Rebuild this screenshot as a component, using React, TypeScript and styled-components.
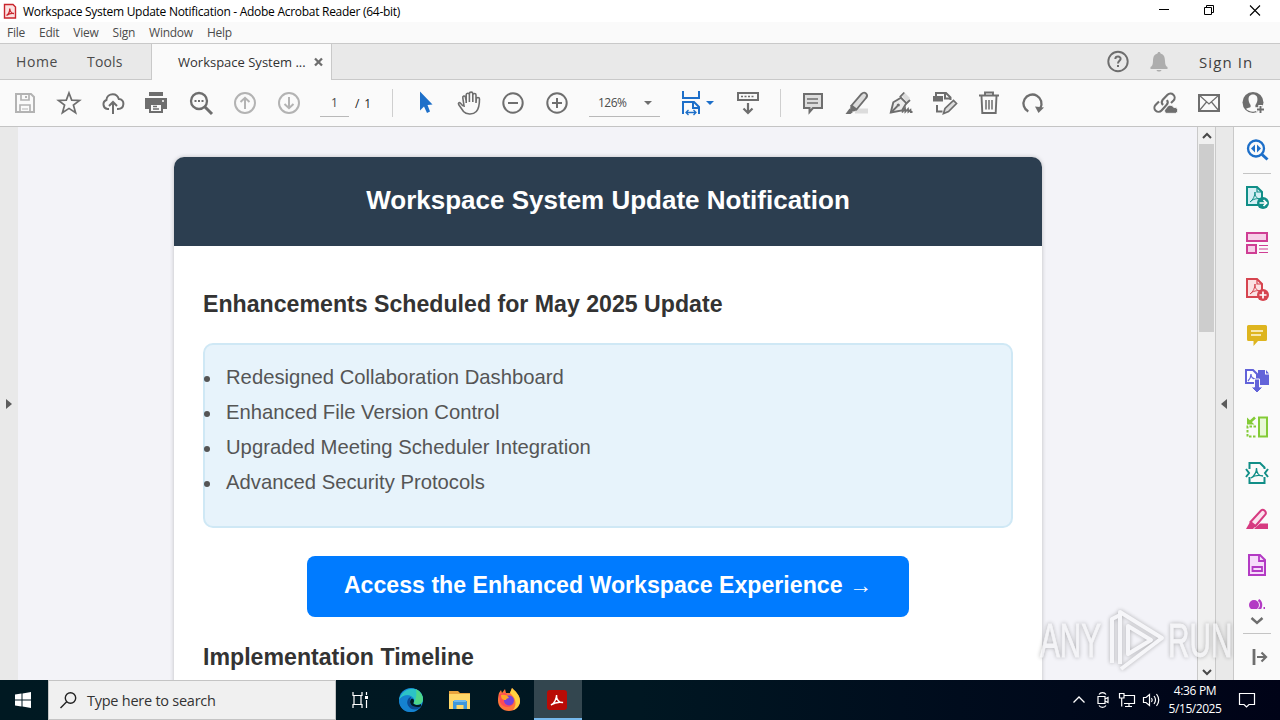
import { FC, ReactNode } from 'react';
import styled, { createGlobalStyle, css } from 'styled-components';

const GlobalStyle = createGlobalStyle`
  * {
    box-sizing: border-box;
  }

  body {
    margin: 0;
    overflow: hidden;
    font-family: 'Open Sans', 'Noto Sans', sans-serif;
  }
`;

const Screen = styled.div`
  position: relative;
  width: 1280px;
  height: 720px;
  display: flex;
  flex-direction: column;
  overflow: hidden;
  background: #fafafa;
`;

const Text = styled.span<{
  $size?: number;
  $spacing?: number;
  $color?: string;
}>`
  font-size: ${({ $size = 12 }) => $size}px;
  letter-spacing: ${({ $spacing = 0 }) => $spacing}px;
  color: ${({ $color = '#4b4b4b' }) => $color};
  white-space: nowrap;
`;

const Svg = styled.svg`
  display: block;
  flex: none;
  overflow: visible;
`;

interface IconProps {
  size?: number;
  color?: string;
  width?: number;
  children: ReactNode;
}

const Icon: FC<IconProps> = ({
  size = 24,
  color = '#6e6e6e',
  width = 2,
  children,
}) => (
  <Svg
    width={size}
    height={size}
    viewBox={`0 0 ${size} ${size}`}
    fill="none"
    stroke={color}
    strokeWidth={width}
  >
    {children}
  </Svg>
);

/* Title bar */

const TitleBar = styled.header`
  height: 22px;
  display: flex;
  align-items: center;
  padding-left: 3px;
  background: #fff;
`;

const TitleText = styled(Text)`
  flex: 1;
  padding-left: 5px;
`;

const WindowButtons = styled.div`
  display: flex;
  padding-right: 2px;
`;

const WindowButton = styled.div`
  width: 46px;
  display: flex;
  justify-content: center;
`;

const MenuBar = styled.nav`
  height: 21px;
  display: flex;
  align-items: center;
  gap: 14px;
  padding-left: 7px;
`;

/* Tabs */

const TabBar = styled.div`
  height: 37px;
  display: flex;
  background: #e9e9e9;
  border-top: 1px solid #c9c9c9;
  border-bottom: 1px solid #c9c9c9;
`;

const TabLinks = styled.div`
  width: 151px;
  display: flex;
  align-items: center;
  gap: 29px;
  padding-left: 16px;
`;

const ActiveTab = styled.div`
  width: 181px;
  height: 36px;
  display: flex;
  align-items: center;
  justify-content: space-between;
  padding: 0 8px 0 26px;
  background: #fafafa;
  border: solid #c9c9c9;
  border-width: 0 1px;
`;

const TabActions = styled.div`
  margin-left: auto;
  display: flex;
  align-items: center;
`;

const TabAction = styled.div`
  width: 41px;
  display: flex;
  justify-content: center;
`;

const SignIn = styled(Text)`
  width: 101px;
  padding-left: 20px;
`;

/* Toolbar */

const ToolbarRow = styled.div`
  height: 47px;
  display: flex;
  align-items: center;
  padding: 0 5px 0 3px;
  border-bottom: 1px solid #c4c4c4;
`;

const ToolSlot = styled.div<{ $width?: number }>`
  width: ${({ $width = 44 }) => $width}px;
  display: flex;
  justify-content: center;
  align-items: center;
`;

const Separator = styled.div<{ $before?: number; $after?: number }>`
  width: 1px;
  height: 28px;
  background: #cfcfcf;
  margin: 0 ${({ $after = 10 }) => $after}px 0 ${({ $before = 20 }) => $before}px;
`;

const PageField = styled.div`
  width: 29px;
  height: 27px;
  margin-left: 9px;
  display: flex;
  align-items: center;
  justify-content: center;
  border-bottom: 1px solid #b9b9b9;
`;

const PageCount = styled(Text)`
  width: 17px;
  margin-left: 6px;
`;

const ZoomField = styled.div`
  width: 71px;
  height: 27px;
  margin: 0 12px 0 10px;
  display: flex;
  align-items: center;
  justify-content: space-between;
  padding: 0 8px 0 9px;
  border-bottom: 1px solid #b9b9b9;
`;

const Caret = styled.i<{ $color?: string }>`
  border: 4px solid transparent;
  border-top-color: ${({ $color = '#6e6e6e' }) => $color};
  border-bottom: 0;
`;

const FitControl = styled.div`
  width: 39px;
  display: flex;
  align-items: center;
  gap: 3px;
`;

const ToolbarEnd = styled.div`
  margin-left: auto;
  display: flex;
`;

/* Workspace */

const Workspace = styled.main`
  height: 553px;
  display: flex;
`;

const gutter = css`
  flex: none;
  display: flex;
  align-items: center;
  justify-content: center;
  background: #e9e9e9;
`;

const LeftGutter = styled.div`
  ${gutter}
  width: 18px;
`;

const RightGutter = styled.div`
  ${gutter}
  width: 19px;
  padding-right: 2px;
  border: solid #c9c9c9;
  border-width: 0 1px;
`;

const Arrow = styled.i<{ $left?: boolean }>`
  border: solid transparent;
  border-width: 5px 6px;
  ${({ $left }) =>
    $left
      ? 'border-right-color: #5c5c5c; border-left: 0;'
      : 'border-left-color: #5c5c5c; border-right: 0;'}
`;

const PageArea = styled.section`
  width: 1179px;
  height: 553px;
  padding: 30px 0 0 156px;
  overflow: hidden;
  background: #f3f3f8;
`;

const Card = styled.article`
  width: 868px;
  height: 600px;
  border-radius: 10px;
  overflow: hidden;
  background: #fff;
  box-shadow: 0 0 4px rgba(0, 0, 0, 0.22);
  font-family: 'Liberation Sans', Arial, sans-serif;
`;

const CardHeader = styled.h1`
  height: 89px;
  margin: 0;
  display: flex;
  align-items: center;
  justify-content: center;
  padding-bottom: 3px;
  background: #2c3e50;
  color: #fff;
  font-size: 26px;
`;

const CardBody = styled.div`
  padding: 44px 29px 0;
  display: flex;
  flex-direction: column;
`;

const Heading = styled.h2`
  margin: 0;
  font-size: 23.15px;
  line-height: 28px;
  color: #333;
`;

const FeatureList = styled.ul`
  height: 185px;
  margin: 25px 0 28px;
  padding: 15px 0 0;
  border: 2px solid #cfe8f5;
  border-radius: 10px;
  background: #e7f3fb;
  font-size: 20.25px;
  line-height: 35px;
  color: #555;
  list-style: none;
`;

const Feature = styled.li`
  display: flex;
  align-items: center;

  &::before {
    content: '';
    width: 6px;
    height: 6px;
    margin: 3px 16px 0 -1px;
    border-radius: 50%;
    background: #555;
  }
`;

const AccessButton = styled.div`
  width: 602px;
  height: 61px;
  margin: 0 auto 26px;
  display: flex;
  align-items: center;
  justify-content: center;
  padding-bottom: 3px;
  border-radius: 8px;
  background: #007bff;
  color: #fff;
  font-size: 23.15px;
  font-weight: bold;
`;

const Scrollbar = styled.div`
  width: 18px;
  display: flex;
  flex-direction: column;
  align-items: center;
  background: #f0f0f0;
  border-left: 1px solid #c9c9c9;
`;

const ScrollButton = styled.div`
  width: 17px;
  height: 17px;
  display: flex;
  align-items: center;
  justify-content: center;
`;

const ScrollThumb = styled.div`
  width: 15px;
  height: 188px;
  margin-bottom: auto;
  background: #cdcdcd;
`;

/* Tool rail */

const Rail = styled.aside`
  width: 46px;
  display: flex;
  flex-direction: column;
  align-items: center;
`;

const RailSlot = styled.div<{ $height?: number }>`
  height: ${({ $height = 46 }) => $height}px;
  flex: none;
  display: flex;
  align-items: center;
`;

const ClippedSlot = styled.div`
  height: 21px;
  padding-top: 12px;
  overflow: hidden;
`;

const RailRule = styled.div`
  flex: none;
  width: 28px;
  height: 1px;
  background: #c4c4c4;
`;

/* Taskbar */

const Taskbar = styled.footer`
  height: 40px;
  display: flex;
  align-items: center;
  background: linear-gradient(90deg, #001922 0%, #001722 50%, #000c1d 75%, #000317);
`;

const TaskButton = styled.div<{ $active?: boolean; $width?: number }>`
  width: ${({ $width = 49 }) => $width}px;
  height: 40px;
  display: flex;
  align-items: center;
  justify-content: center;
  padding-right: 2px;
  ${({ $active }) =>
    $active &&
    css`
      background: #33464f;
      border-bottom: 2px solid #76b9ed;
      padding-top: 2px;
    `}
`;

const SearchBox = styled.div`
  width: 288px;
  height: 40px;
  display: flex;
  align-items: center;
  gap: 9px;
  padding-left: 10px;
  background: #f0f0f0;
  border: 1px solid #c4c4c4;
`;

const Tray = styled.div`
  margin-left: auto;
  display: flex;
  align-items: center;
`;

const TraySlot = styled.div`
  width: 24px;
  display: flex;
  justify-content: center;
`;

const Clock = styled.div`
  width: 64px;
  display: flex;
  flex-direction: column;
  align-items: center;
  line-height: 18px;
`;

const ActionCenter = styled.div`
  width: 53px;
  display: flex;
  justify-content: center;
  padding: 0 13px 1px 0;
`;

const Watermark = styled.div`
  position: absolute;
  left: 1040px;
  top: 606px;
  width: 196px;
  height: 70px;
  display: flex;
  align-items: center;
  opacity: 0.7;
  filter: drop-shadow(0 0 2px rgba(0, 0, 0, 0.4));
`;

const WatermarkText = styled.span<{ $width: number }>`
  width: ${({ $width }) => $width}px;
  font-family: 'Liberation Sans', Arial, sans-serif;
  font-size: 48px;
  line-height: 70px;
  color: #f5f5f7;
  -webkit-text-stroke: 0.8px #f5f5f7;
  transform: scaleX(0.62);
  transform-origin: 0 50%;
  white-space: nowrap;
`;

const pdfGlyph = 'M5 17C8 15 10 11 10 7C10 12 12 14 16 14C12 13 8 14 5 17Z';

const toolsStart = [
  <Icon color="#b3b3b3">
    <path d="M3 3H18L21 6V21H3Z" />
    <path d="M8 3V9H16V3M7 21V14H17V21" strokeWidth={1.7} />
    <path d="M13 5V7" />
    <path d="M9 18H15" strokeWidth={1} />
  </Icon>,
  <Icon>
    <path
      d="M12 2L14.7 9.1L22.5 9.4L16.4 14.1L18.6 21.8L12 17.4L5.4 21.8L7.6 14.1L1.5 9.4L9.3 9.1Z"
      strokeWidth={1.7}
    />
  </Icon>,
  <Icon>
    <path d="M8 18H6.5A4.7 4.7 0 0 1 5.4 9C5.6 5.3 8.5 3.2 11.8 3.2C15 3.2 17 5.3 17.8 8.1C21 8.2 22.6 10.4 22.4 13C22.2 16 20.2 18 17 18H16M12 23V11M8 15L12 11L16 15" />
  </Icon>,
  <Icon>
    <path d="M4 1H18V5H4Z" fill="#6e6e6e" stroke="none" />
    <path d="M0 7H22V18H18V14H4V18H0Z" fill="#6e6e6e" stroke="none" />
    <path d="M5 14V21H17V14" />
    <path d="M8 15.5H12M8 18H14" strokeWidth={1.3} />
    <path d="M17 10H19" stroke="#fff" strokeWidth={1.5} />
  </Icon>,
  <Icon>
    <circle cx="10" cy="10" r="8" strokeWidth={2.3} />
    <path d="M16 16L23 23" strokeWidth={3} />
    <path d="M5.5 10H14.5" strokeDasharray="2 1.5" />
  </Icon>,
  <Icon color="#b3b3b3">
    <circle cx="12" cy="12" r="10" />
    <path d="M12 18V7M7.5 11L12 6.8L16.5 11" />
  </Icon>,
  <Icon color="#b3b3b3">
    <circle cx="12" cy="12" r="10" />
    <path d="M12 6V17M7.5 13L12 17.2L16.5 13" />
  </Icon>,
];

const toolsMiddle = [
  <Icon>
    <path
      d="M7 0.5L19.5 13.5L14.5 14L17 20.5L14 22L11 15.5L7 19.5Z"
      fill="#1d6fc9"
      stroke="none"
    />
  </Icon>,
  <Icon>
    <path
      d="M6 15L3.5 12.3C2.2 11 .8 12.1 1.8 13.8L6.5 20.5C9 23.5 16 24 19.3 20.5C21.5 18.2 22.5 13 22.5 8C22.5 6 19.5 6 19.3 8L19 12V4C19 2 16 2 15.8 4V11M15.8 10V2.5C15.8.6 12.5.6 12.4 2.5V11M12.4 10V3.5C12.2 1.7 9.2 1.9 9.2 3.8V12M9.2 10L8.4 6C7.9 4.4 5.4 5 5.8 6.8L7.2 16"
      strokeWidth={1.6}
    />
  </Icon>,
  <Icon>
    <circle cx="12" cy="12" r="9.7" />
    <path d="M7 12H17" />
  </Icon>,
  <Icon>
    <circle cx="12" cy="12" r="9.7" />
    <path d="M7 12H17M12 7V17" />
  </Icon>,
];

const toolsEnd = [
  <Icon>
    <path d="M3 3H21V17H12L8.5 21V17H3Z" fill="#ddd" />
    <path d="M6 8H17M6 12H17" strokeWidth={1.4} />
  </Icon>,
  <Icon>
    <path d="M10 17.5H23V22.5H10Z" fill="#dcdcdc" stroke="none" />
    <path
      d="M6.5 14.5L16.5 3C18 1.4 19.5 1.2 21 2.4C22.6 3.8 22.4 5.4 21 7L11.5 18.5Z"
      fill="#dcdcdc"
      strokeWidth={1.9}
    />
    <path d="M5.5 14L12 19L9 20.5L5 20Z" fill="#6e6e6e" stroke="none" />
    <path d="M4.5 17.5L8 21L5.5 23H.5Z" fill="#6e6e6e" stroke="none" />
  </Icon>,
  <Icon>
    <path d="M13 5L16 2L21 7L18 11Z" fill="#dcdcdc" stroke="none" />
    <path
      d="M1.8 21.5L4.3 11.3L12 6.8L17.3 12.2L13 19.5Z"
      fill="#ececec"
      strokeWidth={1.9}
    />
    <path d="M10.8 6.2L15.3 1.5M16.8 13L21 9M2 21.5L8.5 15" strokeWidth={1.8} />
    <circle cx="9.3" cy="14" r="1.6" fill="#6e6e6e" stroke="none" />
    <path
      d="M13 21.5L16 17.5L16.3 20.8L19 18L19.3 20.8L21.5 19L21.8 21H23.5"
      strokeWidth={1.8}
    />
  </Icon>,
  <Icon>
    <path d="M0 5H10V10.5H0Z" fill="#6e6e6e" stroke="none" />
    <path d="M3 5V2H13L17.5 6.5V9M12 2V7.5H17.5M4 14V20.5H9.5" />
    <path
      d="M10.5 22.5L12 17.5L20.5 9.5L23.5 12.5L15.5 20.5Z"
      fill="#dcdcdc"
      strokeWidth={1.7}
    />
  </Icon>,
  <Icon>
    <path
      d="M2 4.5H22M8 4V1.5H16V4M4.5 5L5.3 22H18.7L19.5 5"
      strokeWidth={1.9}
    />
    <path d="M9 9V18.5M12 9V18.5M15 9V18.5" strokeWidth={1.5} />
  </Icon>,
  <Icon>
    <path d="M7.3 20.5A9 9 0 1 1 19.3 17" strokeWidth={2.3} />
    <path d="M14 15.5L23 16.5L17.5 22Z" fill="#6e6e6e" stroke="none" />
  </Icon>,
];

const accountTools = [
  <Icon>
    <path
      d="M10 14A4 4 0 0 1 9.5 9L14.5 3.8A4 4 0 0 1 20.5 9.5L18 12M14 9A4 4 0 0 1 13.5 14L8.5 19.5A4 4 0 0 1 2.5 14L6 10.5"
      strokeWidth={2.1}
    />
    <path
      d="M13 22.3A2.8 2.8 0 0 1 13.3 17.3A4 4 0 0 1 20.8 16.5A3 3 0 0 1 22.5 22.3Z"
      fill="#6e6e6e"
      stroke="#fafafa"
      strokeWidth={0.8}
    />
  </Icon>,
  <Icon>
    <path d="M2 4H22V20H2Z" />
    <path d="M2 4L12 13L22 4M2 20L9.5 11M22 20L14.5 11" strokeWidth={1.2} />
  </Icon>,
  <Icon>
    <circle cx="12" cy="11.5" r="10.5" fill="#6e6e6e" stroke="none" />
    <path
      d="M12 3.5C15.2 3.5 16.7 5.8 16.4 9C16.2 11 15.4 12.8 14.4 14V16C15 16.8 17 17 18 18C16 20 14 20.7 12 20.7C9 20.7 6.5 19.5 5 17.8C6.5 16.8 9 16.8 9.6 16V14C8.6 12.8 7.8 11 7.6 9C7.3 5.8 8.8 3.5 12 3.5Z"
      fill="#fafafa"
      stroke="none"
    />
    <path
      d="M15 18.5H24M19.5 14V23"
      stroke="#fafafa"
      strokeWidth={4.5}
    />
    <path d="M16 18.5H23M19.5 15V22" strokeWidth={1.9} />
  </Icon>,
];

const railTools = [
  <Icon color="#108e87">
    <path d="M2 2H12L17 7V20H2Z" fill="#d6eff5" />
    <path d="M12 2V7H17" strokeWidth={1.2} />
    <path d={pdfGlyph} strokeWidth={1} />
    <circle cx="18" cy="18" r="6" fill="#108e87" stroke="none" />
    <path
      d="M14.5 18H21M18.5 15L21.5 18L18.5 21"
      stroke="#fff"
      strokeWidth={1.7}
    />
  </Icon>,
  <Icon color="#cf3e94">
    <path d="M2 2H22V10H2Z M2 14H11V22H2Z" fill="#f7cfe8" />
    <path d="M14 14.5H23M14 18H23M14 21.5H23" strokeWidth={1.2} />
  </Icon>,
  <Icon color="#d6444f">
    <path d="M2 2H12L17 7V20H2Z" fill="#fbe2e3" />
    <path d="M12 2V7H17" strokeWidth={1.2} />
    <path d={pdfGlyph} strokeWidth={1} />
    <circle cx="18" cy="18" r="6" fill="#d6444f" stroke="none" />
    <path d="M14.5 18H21.5M18 14.5V21.5" stroke="#fff" strokeWidth={1.7} />
  </Icon>,
  <Icon>
    <path
      d="M3.5 2H20.5Q22 2 22 3.5V16.5Q22 18 20.5 18H13L8.5 23V18H3.5Q2 18 2 16.5V3.5Q2 2 3.5 2Z"
      fill="#deb51f"
      stroke="none"
    />
    <path d="M6 8H18M6 12H16" stroke="#fff7dd" strokeWidth={1.6} />
  </Icon>,
  <Icon color="#6263d9">
    <path d="M13 1H20V5.5H24V16H13Z M21 1L24 4.5H21Z" fill="#6263d9" stroke="none" />
    <path d="M1 1H8L12 5V14H1Z" fill="#fff" />
    <path d="M3 12C6 9 6 7 6 5C6 8 8 10 11 10" strokeWidth={1.2} />
    <path
      d="M9.5 10H14.5V18H18L12 24L6 18H9.5Z"
      fill="#6263d9"
      stroke="#fafafa"
      strokeWidth={1}
    />
  </Icon>,
  <Icon color="#83cb36">
    <path d="M14 2.5H22V21.5H14Z" fill="#e8f8d6" />
    <path d="M11 11.5H2.5V21.5H12" strokeWidth={2} strokeDasharray="2.5 1.5" />
    <path d="M10 2.5L4.5 7.5" strokeWidth={2.6} />
    <path d="M2 2.5V9.5H9.5Z" fill="#83cb36" stroke="none" />
  </Icon>,
  <Icon color="#108e87">
    <path d="M4.5 8V2H15L19.5 6.5V8M4.5 16V22H19.5V16M1 8L4 12L1 16M23 8L20 12L23 16" />
    <path
      d="M6 17C9 15 11.5 12 11.5 7C11.5 12 14 15 18 15C14 14 10 14 6 17Z"
      strokeWidth={1.3}
    />
  </Icon>,
  <Icon color="#d63a80">
    <path d="M9 22L15 16.5H23V22Z" fill="#d63a80" stroke="none" />
    <path
      d="M5.5 15L16 3.5C18.3 1.6 22.3 4.8 20.2 7.7L10.5 19Z"
      fill="#fbe2ee"
    />
    <path d="M1 22L5 15L10.5 19.5L8 22Z" fill="#d63a80" stroke="none" />
  </Icon>,
  <Icon color="#b33ac4">
    <path d="M4 2H15L20 7V22H4Z" fill="#f6dcfa" />
    <path d="M14 2V8H20M7.5 14H17V18H7.5Z" strokeWidth={1.8} />
  </Icon>,
];

const EdgeLogo = () => (
  <Icon>
    <circle cx="12" cy="12" r="12" fill="#1689d8" stroke="none" />
    <path
      d="M0 12C2 3 12 -2 19 2.3C24 5.5 25.5 12 22.5 15C20 17.3 15.5 17 14.3 15.3C16 13.5 15.5 10 13 8.8C9 6.5 3 7.5 0 12Z"
      fill="#2cc3c6"
      stroke="none"
    />
    <path
      d="M17 1.2C23 4 25.5 11 22.8 14.7C20.5 17.3 15.5 17 14.3 15.3C17 12 18 6 17 1.2Z"
      fill="#4fd688"
      stroke="none"
    />
    <path
      d="M0 12C3 7 9 6 12.8 8.7C8.5 9 6.5 13 8.5 17C10 20.5 14 23 17.5 22.5C9 27 0 21.5 0 12Z"
      fill="#1582d0"
      stroke="none"
    />
    <path
      d="M12.5 8.8C9 9.5 7 13.5 9 17.5C11 21.5 17 24 22.3 18.2C17 20 12 18.5 11 14.5C10.6 12.5 11.5 10.5 12.5 8.8Z"
      fill="#0c4a92"
      stroke="none"
    />
    <path
      d="M12.8 10.5C15.2 10.8 15.6 13.3 14.3 15.2C15.5 17.3 19.5 17.6 22 16L22.3 18.2C17.5 20.3 12.3 18.5 11.2 15C10.8 13 11.5 11.3 12.8 10.5Z"
      fill="#001922"
      stroke="none"
    />
  </Icon>
);

const FolderLogo = () => (
  <Icon width={0}>
    <path d="M1 3H10L12 5H22V10H1Z" fill="#e8a33d" />
    <path d="M1 6H22V21H1Z" fill="#ffd768" />
    <path d="M5 13H19V21H15.5V17H8.5V21H5Z" fill="#3f97da" />
    <path d="M6 12H18V14H6Z" fill="#70b9ec" />
  </Icon>
);

const FirefoxLogo = () => (
  <Icon width={0}>
    <path
      d="M2 5L4 2L5 5L8 1L9 5L13 5L15 0C18 3 23 7 23 13C23 19 18 23 12 23C5.5 23 1 18.5 1 12.5C1 9.5 1.5 7 2 5Z"
      fill="#ff763b"
    />
    <path d="M13 5L15 0C18 3 23 7 23 13C23 17 20 21 16 22C21 16 18 9 13 5Z" fill="#ffd13f" />
    <path d="M2 7C4 5 8 4 10 6L8 10C9 15 12 17 17 15C14 21 5 20 3 14Z" fill="#ff4a55" />
    <circle cx="12" cy="12.5" r="5" fill="#7542d8" />
    <path d="M4 7C7 6 11 7 12 10C10 10 9 11 9 12C5 12 4 10 4 7Z" fill="#ffa629" />
  </Icon>
);

const AcrobatLogo = () => (
  <Icon size={22}>
    <rect x="1" y="1" width="20" height="20" rx="3" fill="#b90b06" stroke="none" />
    <path
      d="M5 16C8 15 11 9 10.5 6C10 10 13 14 17 13.5C13 12.8 8 14 5 16Z"
      stroke="#fff"
      strokeWidth={1.5}
    />
  </Icon>
);

const App: FC = () => (
  <>
    <GlobalStyle />
    <Screen>
      <TitleBar>
        <Svg width="15" height="16" viewBox="0 0 15 16" fill="none" stroke="#c9252d">
          <path d="M1.5 1.5H10L12.5 4V15H1.5Z" fill="#fbe3e2" strokeWidth="1.4" />
          <path
            d="M3.5 12.5C6 11 7 7.5 6.7 5.5C7 8.5 9 10.5 11 10.5C8.5 10 5.5 11 3.5 12.5Z"
            strokeWidth="1.3"
          />
        </Svg>
        <TitleText $size={12} $spacing={-0.28} $color="#000">
          Workspace System Update Notification - Adobe Acrobat Reader (64-bit)
        </TitleText>
        <WindowButtons>
          <WindowButton>
            <Icon size={12} color="#000" width={1}>
              <path d="M2 4.5H12" />
            </Icon>
          </WindowButton>
          <WindowButton>
            <Icon size={12} color="#000" width={1}>
              <path d="M1.5 2.5H8.5V9.5H1.5ZM3.5 2V.5H10.5V7.5H9" />
            </Icon>
          </WindowButton>
          <WindowButton>
            <Icon size={12} color="#000" width={1.1}>
              <path d="M1 .5L11 10.5M11 .5L1 10.5" />
            </Icon>
          </WindowButton>
        </WindowButtons>
      </TitleBar>
      <MenuBar>
        {['File', 'Edit', 'View', 'Sign', 'Window', 'Help'].map((item) => (
          <Text key={item} $size={12} $spacing={-0.25}>
            {item}
          </Text>
        ))}
      </MenuBar>
      <TabBar>
        <TabLinks>
          <Text $size={14} $spacing={0.6}>
            Home
          </Text>
          <Text $size={14} $spacing={0.2}>
            Tools
          </Text>
        </TabLinks>
        <ActiveTab>
          <Text $size={13} $color="#323232">
            Workspace System ...
          </Text>
          <Icon size={8} width={2.3}>
            <path d="M0 .5L7 7.5M7 .5L0 7.5" />
          </Icon>
        </ActiveTab>
        <TabActions>
          <TabAction>
            <Icon>
              <circle cx="12" cy="11.5" r="9.7" strokeWidth={1.9} />
              <path d="M9.3 9C9.5 5.7 14.8 5.9 14.6 8.9C14.5 10.8 12 11 12 13.5M12 15V17" />
            </Icon>
          </TabAction>
          <TabAction>
            <Icon>
              <path
                d="M12 2C13 2 13.5 2.7 13.5 3.6C17 4.5 17.8 7 18 11C18.1 14.5 18.7 16 20.5 17V19H3.5V17C5.3 16 5.9 14.5 6 11C6.2 7 7 4.5 10.5 3.6C10.5 2.7 11 2 12 2ZM9.5 20H14.5C14 22 10 22 9.5 20Z"
                fill="#adadad"
                stroke="none"
              />
            </Icon>
          </TabAction>
          <SignIn $size={15} $spacing={1.1} $color="#404040">
            Sign In
          </SignIn>
        </TabActions>
      </TabBar>
      <ToolbarRow>
        {toolsStart.map((icon, i) => (
          <ToolSlot key={i}>{icon}</ToolSlot>
        ))}
        <PageField>
          <Text $size={12}>1</Text>
        </PageField>
        <PageCount $size={12} $spacing={0.9} $color="#222">
          / 1
        </PageCount>
        <Separator />
        {toolsMiddle.map((icon, i) => (
          <ToolSlot key={i}>{icon}</ToolSlot>
        ))}
        <ZoomField>
          <Text $size={12} $spacing={-0.5}>
            126%
          </Text>
          <Caret />
        </ZoomField>
        <ToolSlot $width={53}>
          <FitControl>
            <Icon color="#1d6fc9">
              <path d="M4 0V7H20V0M4 23V11H15L20 16V23M14 11V17H20" />
              <path
                d="M7 21.5H17M9.5 19L7 21.5L9.5 24M14.5 19L17 21.5L14.5 24"
                strokeWidth={1.3}
              />
            </Icon>
            <Caret $color="#1d6fc9" />
          </FitControl>
        </ToolSlot>
        <ToolSlot $width={46}>
          <Icon>
            <path d="M2 2H22V9H2Z" />
            <path d="M5 5.5H19" strokeDasharray="2 1.5" strokeWidth={1.7} />
            <path d="M12 12V22M7.5 17.5L12 22L16.5 17.5" strokeWidth={2.2} />
          </Icon>
        </ToolSlot>
        <Separator $before={9} />
        {toolsEnd.map((icon, i) => (
          <ToolSlot key={i}>{icon}</ToolSlot>
        ))}
        <ToolbarEnd>
          {accountTools.map((icon, i) => (
            <ToolSlot key={i}>{icon}</ToolSlot>
          ))}
        </ToolbarEnd>
      </ToolbarRow>
      <Workspace>
        <LeftGutter>
          <Arrow />
        </LeftGutter>
        <PageArea>
          <Card>
            <CardHeader>Workspace System Update Notification</CardHeader>
            <CardBody>
              <Heading>Enhancements Scheduled for May 2025 Update</Heading>
              <FeatureList>
                <Feature>Redesigned Collaboration Dashboard</Feature>
                <Feature>Enhanced File Version Control</Feature>
                <Feature>Upgraded Meeting Scheduler Integration</Feature>
                <Feature>Advanced Security Protocols</Feature>
              </FeatureList>
              <AccessButton>Access the Enhanced Workspace Experience →</AccessButton>
              <Heading>Implementation Timeline</Heading>
            </CardBody>
          </Card>
        </PageArea>
        <Scrollbar>
          <ScrollButton>
            <Icon size={10} color="#484848">
              <path d="M1 7L5 3L9 7" />
            </Icon>
          </ScrollButton>
          <ScrollThumb />
          <ScrollButton>
            <Icon size={10} color="#484848">
              <path d="M1 3L5 7L9 3" />
            </Icon>
          </ScrollButton>
        </Scrollbar>
        <RightGutter>
          <Arrow $left />
        </RightGutter>
        <Rail>
          <RailSlot>
            <Icon color="#1d6fc9">
              <circle cx="11" cy="10.5" r="8" strokeWidth={2.3} />
              <path d="M17 16.5L22.5 21.5" strokeWidth={3} />
              <path d="M10 6.5V14.5L6 10.5Z M12 6.5V14.5L16 10.5Z" fill="#1d6fc9" stroke="none" />
            </Icon>
          </RailSlot>
          <RailRule />
          {railTools.map((icon, i) => (
            <RailSlot key={i}>{icon}</RailSlot>
          ))}
          <ClippedSlot>
            <Icon color="#b33ac4">
              <circle cx="9" cy="5" r="5" fill="#b33ac4" stroke="none" />
              <path d="M13.5 0C17 2 17 8 13.5 10" strokeWidth={2.3} />
              <path d="M18.5 8H20" />
            </Icon>
          </ClippedSlot>
          <RailSlot $height={24}>
            <Icon size={14} width={2.4}>
              <path d="M1.5 4L7 9L12.5 4" />
            </Icon>
          </RailSlot>
          <RailRule />
          <RailSlot>
            <Icon>
              <path d="M9 4V20" strokeWidth={2.8} />
              <path d="M12 12H20.5M16.5 7.5L21 12L16.5 16.5" strokeWidth={2.2} />
            </Icon>
          </RailSlot>
        </Rail>
      </Workspace>
      <Taskbar>
        <TaskButton $width={48}>
          <Icon size={16} width={0}>
            <path
              d="M0 2.5L6.5 1.6V7.5H0ZM7.5 1.4L16 0V7.5H7.5ZM0 8.5H6.5V14.4L0 13.5ZM7.5 8.5H16V16L7.5 14.6Z"
              fill="#fff"
            />
          </Icon>
        </TaskButton>
        <SearchBox>
          <Icon size={19} color="#222" width={1.4}>
            <circle cx="11.5" cy="7" r="5.2" />
            <path d="M7.7 10.8L1.5 17" />
          </Icon>
          <Text $size={14.5} $spacing={-0.25} $color="#333">
            Type here to search
          </Text>
        </SearchBox>
        <TaskButton $width={51}>
          <Icon size={18} color="#fff" width={1.2}>
            <path d="M1 1V4.5H10V1M1 17V13.5H10V17M2 4.5V13.5M9 4.5V13.5M14.5 1V4M14.5 9V17" />
            <path d="M13 5H16V8H13Z" fill="#fff" stroke="none" />
          </Icon>
        </TaskButton>
        <TaskButton>
          <EdgeLogo />
        </TaskButton>
        <TaskButton>
          <FolderLogo />
        </TaskButton>
        <TaskButton>
          <FirefoxLogo />
        </TaskButton>
        <TaskButton $active $width={48}>
          <AcrobatLogo />
        </TaskButton>
        <Tray>
          <TraySlot>
            <Icon size={14} color="#fff" width={1.3}>
              <path d="M1.5 9.5L7 4L12.5 9.5" />
            </Icon>
          </TraySlot>
          <TraySlot>
            <Icon size={16} color="#fff" width={1.2}>
              <path d="M3 4.5H10V11.5H3Z M10 7L13 5.5V10.5L10 9M4 2.5C5.5 0 9.5 0 11 2.5M4 13.5C5.5 16 9.5 16 11 13.5" />
            </Icon>
          </TraySlot>
          <TraySlot>
            <Icon size={16} color="#fff" width={1.2}>
              <path d="M5 3.5H15.5V11.5H5M10 11.5V14.5M6 14.5H13M.5 1.5H5V6H.5ZM2.7 6V14.5" />
            </Icon>
          </TraySlot>
          <TraySlot>
            <Icon size={16} color="#fff" width={1.2}>
              <path d="M.5 5.5H3L6.5 2.5V13.5L3 10.5H.5ZM8.5 6Q10 8 8.5 10M11 4Q14 8 11 12M13.5 2Q18 8 13.5 14" />
            </Icon>
          </TraySlot>
          <Clock>
            <Text $size={12} $spacing={-0.35} $color="#fff">
              4:36 PM
            </Text>
            <Text $size={12} $spacing={-0.45} $color="#fff">
              5/15/2025
            </Text>
          </Clock>
          <ActionCenter>
            <Icon size={18} color="#fff" width={1.2}>
              <path d="M1.5 2.5H16.5V13.5H11L8.5 16L6 13.5H1.5Z" />
            </Icon>
          </ActionCenter>
        </Tray>
      </Taskbar>
      <Watermark>
        <WatermarkText $width={68}>ANY</WatermarkText>
        <Svg
          width="60"
          height="66"
          viewBox="0 0 60 66"
          fill="none"
          stroke="#f8f8fa"
          strokeWidth="4"
        >
          <path d="M4 55V11L12 7M12 56V4L54 30L13 61M20 18L43 32L20 46Z" strokeLinejoin="round" />
        </Svg>
        <WatermarkText $width={66}>RUN</WatermarkText>
      </Watermark>
    </Screen>
  </>
);

export default App;
